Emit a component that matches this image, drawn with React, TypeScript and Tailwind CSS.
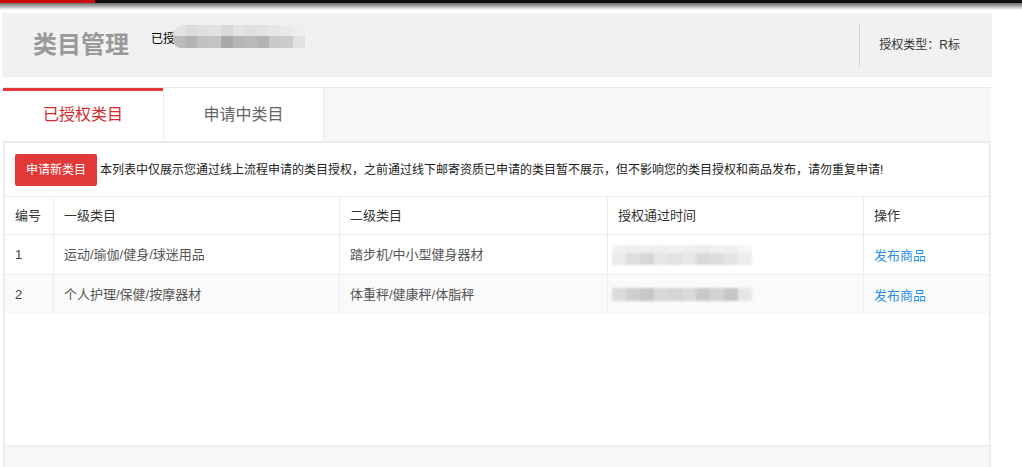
import React from "react";

const font = { fontFamily: '"Liberation Sans", "Noto Sans CJK SC", sans-serif' };

type Row = { id: number; first: string; second: string; shades: string[] };

const rows: Row[] = [
  {
    id: 1,
    first: "运动/瑜伽/健身/球迷用品",
    second: "踏步机/中小型健身器材",
    shades: ["#ececec", "#dedede", "#d6d6d6", "#e6e6e6", "#e3e3e3", "#e8e8e8", "#d9d9d9", "#dddddd", "#e4e4e4", "#ededed"],
  },
  {
    id: 2,
    first: "个人护理/保健/按摩器材",
    second: "体重秤/健康秤/体脂秤",
    shades: ["#dcdcdc", "#cfcfcf", "#c8c8c8", "#d8d8d8", "#d5d5d5", "#dadada", "#c9c9c9", "#d3d3d3", "#c6c6c6", "#e6e6e6"],
  },
];

const headTop = ["#e3e3e3", "#dcdcdc", "#e0e0e0", "#e2e2e2", "#d9d9d9", "#e4e4e4", "#e0e0e0", "#e3e3e3", "#e6e6e6", "#eaeaea", "#eeeeee"];
const headBottom = ["#bcbcbc", "#b4b4b4", "#c2c2c2", "#c4c4c4", "#a9a9a9", "#b7b7b7", "#bababa", "#b5b5b5", "#c8c8c8", "#cccccc", "#e2e2e2"];

function Mosaic({ shades, cell }: { shades: string[]; cell: string }) {
  return (
    <div className="flex">
      {shades.map((c, i) => (
        <div key={i} className={cell} style={{ background: c }} />
      ))}
    </div>
  );
}

export default function App() {
  return (
    <div className="min-h-[467px] w-[1022px] overflow-hidden bg-white text-[#333]" style={font}>
      {/* top strip */}
      <div className="flex h-[3px]">
        <div className="w-[95px] bg-[#cc0a0a]" />
        <div className="flex-1 bg-[#111]" />
      </div>
      <div className="h-[7px] bg-gradient-to-b from-[#6f6f6f] to-white" />

      {/* header */}
      <div className="ml-[2px] mt-[3px] flex h-[64px] w-[990px] items-center bg-[#f1f1f1]">
        <h1 className="ml-[31px] text-[24px] font-bold leading-none text-[#999]">类目管理</h1>
        <div className="ml-[22px] flex items-center self-start pt-[12px]">
          <span className="mt-[5px] text-[12px] leading-none text-black">已授</span>
          <div className="-ml-[2px] flex flex-col blur-[0.6px]">
            <Mosaic shades={headTop} cell="h-[11px] w-[12px] first:rounded-tl-[10px]" />
            <Mosaic shades={headBottom} cell="h-[12px] w-[12px] first:rounded-bl-[8px]" />
          </div>
        </div>
        <div className="ml-auto h-[44px] w-px bg-[#cfcfcf]" />
        <span className="ml-[19px] mr-[32px] text-[12px] leading-none text-[#333]">授权类型：R标</span>
      </div>

      {/* panel */}
      <div className="ml-[3px] mt-[10px] w-[988px] border-t border-[#e8e8e8]">
        <div className="flex h-[55px] border-b-2 border-[#ececec] bg-[#f7f7f7]">
          <div className="flex w-[160px] items-center justify-center border-t-[3px] border-[#e23838] bg-white pb-[2px] text-[16px] text-[#d42a2a]">
            已授权类目
          </div>
          <div className="flex w-[161px] items-center justify-center border-x border-[#ececec] bg-white text-[16px] text-[#666]">
            申请中类目
          </div>
        </div>

        <div className="border-x-2 border-[#ececec] bg-white">
          <div className="flex h-[53px] items-center pl-[10px]">
            <button className="h-[32px] w-[82px] rounded-[2px] bg-[#e33838] text-[12px] text-white">申请新类目</button>
            <p className="ml-[3px] text-[12px] text-[#222]">
              本列表中仅展示您通过线上流程申请的类目授权，之前通过线下邮寄资质已申请的类目暂不展示，但不影响您的类目授权和商品发布，请勿重复申请!
            </p>
          </div>

          <div className="grid grid-cols-[49px_286px_268px_256px_125px] border-t border-[#ececec] text-[13px]">
            {["编号", "一级类目", "二级类目", "授权通过时间", "操作"].map((h, i) => (
              <div
                key={h}
                className={`flex h-[38px] items-center border-b border-[#ececec] pl-[10px] text-[#333] ${i < 4 ? "border-r" : ""}`}
              >
                {h}
              </div>
            ))}
            {rows.map((r, ri) => {
              const bg = ri === 1 ? "bg-[#fafafa]" : "bg-white";
              const h = ri === 1 ? "h-[39px]" : "h-[40px] border-b border-[#ececec]";
              return (
                <React.Fragment key={r.id}>
                  <div className={`flex items-center border-r border-[#ececec] pl-[10px] text-[#444] ${bg} ${h}`}>{r.id}</div>
                  <div className={`flex items-center border-r border-[#ececec] pl-[10px] text-[#555] ${bg} ${h}`}>{r.first}</div>
                  <div className={`flex items-center border-r border-[#ececec] pl-[10px] text-[#555] ${bg} ${h}`}>{r.second}</div>
                  <div className={`flex items-center border-r border-[#ececec] pl-[4px] ${bg} ${h}`}>
                    <div className="blur-[0.8px]">
                      {ri === 0 ? (
                        <div className="flex flex-col">
                          <Mosaic shades={["#f1f1f1", "#eeeeee", "#f0f0f0", "#efefef", "#f2f2f2", "#efefef", "#ececec", "#f1f1f1", "#f0f0f0", "#f6f6f6"]} cell="h-[8px] w-[14px]" />
                          <Mosaic shades={r.shades} cell="h-[12px] w-[14px]" />
                        </div>
                      ) : (
                        <Mosaic shades={r.shades} cell="h-[13px] w-[14px]" />
                      )}
                    </div>
                  </div>
                  <div className={`flex items-center pl-[10px] ${bg} ${h}`}>
                    <a href="#" className="mt-[3px] text-[#2a8fe3]">发布商品</a>
                  </div>
                </React.Fragment>
              );
            })}
          </div>

          <div className="h-[131px]" />
        </div>
        <div className="h-[40px] border-x-2 border-t-2 border-[#ececec] bg-[#f7f7f7]" />
      </div>
    </div>
  );
}
